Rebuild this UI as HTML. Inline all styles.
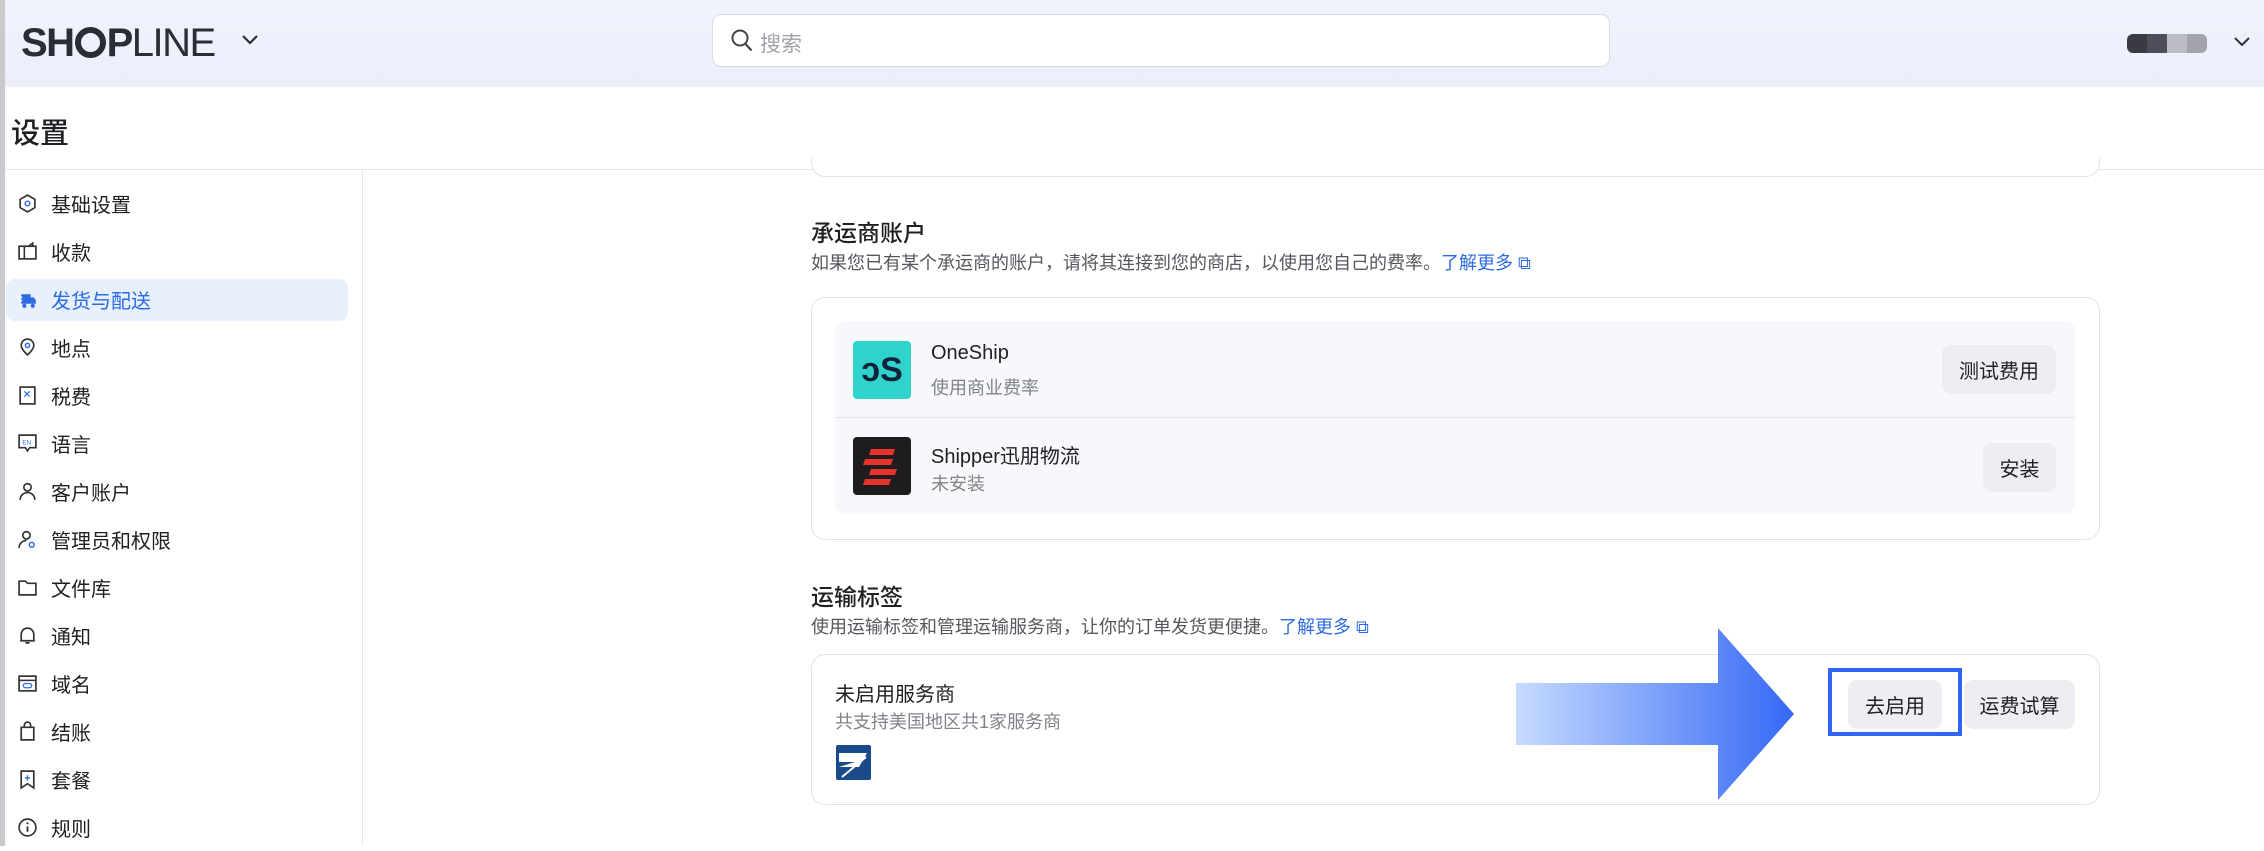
<!DOCTYPE html>
<html><head><meta charset="utf-8"><style>
*{margin:0;padding:0;box-sizing:border-box}
body{width:2264px;height:846px;overflow:hidden;background:#fff;font-family:"Liberation Sans","Noto Sans CJK SC",sans-serif;color:#1f1f24;position:relative}
.abs{position:absolute}
.hdr{left:0;top:0;width:2264px;height:87px;background:linear-gradient(#f0f2fc,#eceefa)}
.strip{left:0;top:0;width:5px;height:846px;background:#c9c9ce}
.logo{left:21px;top:20px;font-size:40px;letter-spacing:-1.5px;color:#2a2d34;line-height:46px}
.search{left:712px;top:14px;width:898px;height:53px;background:#fff;border:1px solid #d9dbe3;border-radius:9px}
.nav{left:17px;font-size:20px;height:48px;display:flex;align-items:center;gap:13px}
.nav svg{width:21px;height:21px}
.card{border:1.5px solid #e1e2e6;border-radius:14px;background:#fff}
.h2{font-size:23px;font-weight:500;color:#1f1f24}
.desc{font-size:18px;color:#55575e}
.link{color:#2d6be4}
.btn{background:#eceef4;border-radius:9px;font-size:20px;display:flex;align-items:center;justify-content:center;color:#1f1f24}
.name{font-size:20px}
.sub{font-size:18px;color:#80838c}
</style></head><body>
<div class="abs hdr"></div>
<div class="abs strip"></div>
<div class="abs logo"><b style="font-weight:700">SH<span style="display:inline-block;width:31px;height:31px;border-radius:50%;border:6px solid #2a2d34;vertical-align:-2px;margin:0 1px"></span>P</b><span style="font-weight:300">LINE</span></div>
<svg class="abs" style="left:240px;top:32px" width="20" height="16" viewBox="0 0 20 16"><path d="M3 4l7 7 7-7" fill="none" stroke="#2a2d34" stroke-width="2.2"/></svg>
<div class="abs search"></div>
<svg class="abs" style="left:730px;top:28px" width="24" height="26" viewBox="0 0 24 26"><circle cx="10" cy="10" r="7.5" fill="none" stroke="#444" stroke-width="2"/><path d="M15.5 16l6 6.5" stroke="#444" stroke-width="2.2"/></svg>
<div class="abs" style="left:760px;top:28px;font-size:21px;color:#a0a3ab">搜索</div>
<div class="abs" style="left:2127px;top:34px;width:80px;height:19px;border-radius:6px;background:linear-gradient(90deg,#3a3a45 0 25%,#4e4e5a 25% 50%,#bcbcc6 50% 75%,#a3a3ad 75%)"></div>
<svg class="abs" style="left:2232px;top:34px" width="20" height="16" viewBox="0 0 20 16"><path d="M3 4l7 7 7-7" fill="none" stroke="#333" stroke-width="2"/></svg>

<div class="abs" style="left:11px;top:110px;font-size:29px;font-weight:500">设置</div>
<div class="abs" style="left:5px;top:169px;width:2259px;height:1px;background:#e6e6ea"></div>
<div class="abs" style="left:362px;top:170px;width:1px;height:676px;background:#e6e6ea"></div>
<div class="abs" style="left:6px;top:279px;width:342px;height:42px;background:#e8effd;border-radius:9px"></div>

<div class="abs nav" style="top:179px"><svg viewBox="0 0 20 20"><path d="M10 2l7 4v8l-7 4-7-4V6z" fill="none" stroke="#333" stroke-width="1.6"/><circle cx="10" cy="10" r="2.2" fill="none" stroke="#2d6be4" stroke-width="1.4"/></svg>基础设置</div>
<div class="abs nav" style="top:227px"><svg viewBox="0 0 20 20"><rect x="2" y="5" width="16" height="12" fill="none" stroke="#333" stroke-width="1.6"/><path d="M7 5v12M11 5l4-3v3" fill="none" stroke="#333" stroke-width="1.5"/></svg>收款</div>
<div class="abs nav" style="top:275px;color:#2d6be4"><svg viewBox="0 0 20 20"><path d="M4 5h9v9H4zM13 8h3l2 3v3h-5z" fill="#2d6be4"/><circle cx="7" cy="16" r="2" fill="#2d6be4"/><circle cx="15" cy="16" r="2" fill="#2d6be4"/><path d="M1 8h4M1 11h4" stroke="#fff" stroke-width="1.4"/></svg>发货与配送</div>
<div class="abs nav" style="top:323px"><svg viewBox="0 0 20 20"><path d="M10 17s-6-5-6-9a6 6 0 0112 0c0 4-6 9-6 9z" fill="none" stroke="#333" stroke-width="1.6"/><circle cx="10" cy="8" r="2" fill="none" stroke="#2d6be4" stroke-width="1.4"/></svg>地点</div>
<div class="abs nav" style="top:371px"><svg viewBox="0 0 20 20"><rect x="3" y="2" width="14" height="16" fill="none" stroke="#333" stroke-width="1.6"/><path d="M7 6l5 5M7 11l5-5" stroke="#2d6be4" stroke-width="1.2"/></svg>税费</div>
<div class="abs nav" style="top:419px"><svg viewBox="0 0 20 20"><path d="M2 2h16v12h-6l-2 3-2-3H2z" fill="none" stroke="#333" stroke-width="1.6"/><text x="5" y="11" font-size="6" fill="#2d6be4" font-family="Liberation Sans">EN</text></svg>语言</div>
<div class="abs nav" style="top:467px"><svg viewBox="0 0 20 20"><circle cx="10" cy="6" r="3.5" fill="none" stroke="#333" stroke-width="1.6"/><path d="M3 18c0-4 3-7 7-7s7 3 7 7" fill="none" stroke="#333" stroke-width="1.6"/></svg>客户账户</div>
<div class="abs nav" style="top:515px"><svg viewBox="0 0 20 20"><circle cx="9" cy="6" r="3.5" fill="none" stroke="#333" stroke-width="1.6"/><path d="M2 18c0-4 3-7 7-7" fill="none" stroke="#333" stroke-width="1.6"/><circle cx="14" cy="15" r="2.3" fill="none" stroke="#2d6be4" stroke-width="1.4"/></svg>管理员和权限</div>
<div class="abs nav" style="top:563px"><svg viewBox="0 0 20 20"><path d="M2 4h6l2 2h8v11H2z" fill="none" stroke="#333" stroke-width="1.6"/></svg>文件库</div>
<div class="abs nav" style="top:611px"><svg viewBox="0 0 20 20"><path d="M4 15V9a6 6 0 0112 0v6zM3 15h14M8 17h4" fill="none" stroke="#333" stroke-width="1.6"/></svg>通知</div>
<div class="abs nav" style="top:659px"><svg viewBox="0 0 20 20"><rect x="2" y="3" width="16" height="14" fill="none" stroke="#333" stroke-width="1.6"/><path d="M2 7h16" stroke="#333" stroke-width="1.4"/><rect x="6" y="10" width="8" height="4" rx="2" fill="none" stroke="#2d6be4" stroke-width="1.2"/></svg>域名</div>
<div class="abs nav" style="top:707px"><svg viewBox="0 0 20 20"><path d="M4 6h12v12H4zM7 6V4a3 3 0 016 0v2" fill="none" stroke="#333" stroke-width="1.6"/></svg>结账</div>
<div class="abs nav" style="top:755px"><svg viewBox="0 0 20 20"><path d="M4 2h12v16l-6-4-6 4z" fill="none" stroke="#333" stroke-width="1.6"/><path d="M10 6v5M7.5 8.5h5" stroke="#2d6be4" stroke-width="1.3"/></svg>套餐</div>
<div class="abs nav" style="top:803px"><svg viewBox="0 0 20 20"><circle cx="10" cy="10" r="8" fill="none" stroke="#333" stroke-width="1.6"/><path d="M10 9v5" stroke="#333" stroke-width="1.8"/><circle cx="10" cy="6" r="1" fill="#333"/></svg>规则</div>

<div class="abs card" style="left:811px;top:158px;width:1289px;height:19px;border-top:none;border-radius:0 0 14px 14px"></div>

<div class="abs h2" style="left:811px;top:214px">承运商账户</div>
<div class="abs desc" style="left:811px;top:249px">如果您已有某个承运商的账户，请将其连接到您的商店，以使用您自己的费率。<span class="link">了解更多 ⧉</span></div>
<div class="abs card" style="left:811px;top:297px;width:1289px;height:243px"></div>
<div class="abs" style="left:835px;top:321px;width:1240px;height:193px;background:#f7f8fb;border-radius:10px"></div>
<div class="abs" style="left:835px;top:417px;width:1240px;height:1px;background:#e6e7eb"></div>
<div class="abs" style="left:853px;top:341px;width:58px;height:58px;background:#2fd3cb;border-radius:4px;font-size:34px;font-weight:700;color:#10233a;display:flex;align-items:center;justify-content:center">ↄS</div>
<div class="abs name" style="left:931px;top:342px">OneShip</div>
<div class="abs sub" style="left:931px;top:374px">使用商业费率</div>
<div class="abs btn" style="left:1942px;top:345px;width:114px;height:49px">测试费用</div>
<div class="abs" style="left:853px;top:437px;width:58px;height:58px;background:#1d1d1f;border-radius:4px"></div>
<svg class="abs" style="left:853px;top:437px" width="58" height="58" viewBox="0 0 58 58"><g fill="#e8322c"><path d="M18 12h24l-2 6H16zM12 22h28l-2 6H10zM18 32h26l-2 6H16zM12 42h26l-2 6H10z"/></g></svg>
<div class="abs name" style="left:931px;top:440px">Shipper迅朋物流</div>
<div class="abs sub" style="left:931px;top:470px">未安装</div>
<div class="abs btn" style="left:1983px;top:443px;width:73px;height:49px">安装</div>

<div class="abs h2" style="left:811px;top:578px">运输标签</div>
<div class="abs desc" style="left:811px;top:613px">使用运输标签和管理运输服务商，让你的订单发货更便捷。<span class="link">了解更多 ⧉</span></div>
<div class="abs card" style="left:811px;top:654px;width:1289px;height:151px"></div>
<div class="abs name" style="left:835px;top:678px">未启用服务商</div>
<div class="abs sub" style="left:835px;top:708px">共支持美国地区共1家服务商</div>
<svg class="abs" style="left:836px;top:745px" width="35" height="35" viewBox="0 0 35 35"><rect width="35" height="35" rx="2" fill="#1b4a8a"/><path d="M3 8h28l-8 14H3l16-5H3z" fill="#fff"/><path d="M6 32L30 12" stroke="#fff" stroke-width="2"/></svg>
<div class="abs btn" style="left:1848px;top:680px;width:94px;height:49px">去启用</div>
<div class="abs btn" style="left:1964px;top:680px;width:111px;height:49px">运费试算</div>
<div class="abs" style="left:1828px;top:668px;width:134px;height:68px;border:4.5px solid #2f66f5"></div>
<svg class="abs" style="left:1516px;top:628px" width="280" height="172" viewBox="0 0 280 172"><defs><linearGradient id="g" x1="0" x2="1"><stop offset="0" stop-color="#c6dbfe"/><stop offset="1" stop-color="#3568f6"/></linearGradient></defs><path d="M0 55h202V0l76 86-76 86V117H0z" fill="url(#g)"/></svg>
</body></html>
